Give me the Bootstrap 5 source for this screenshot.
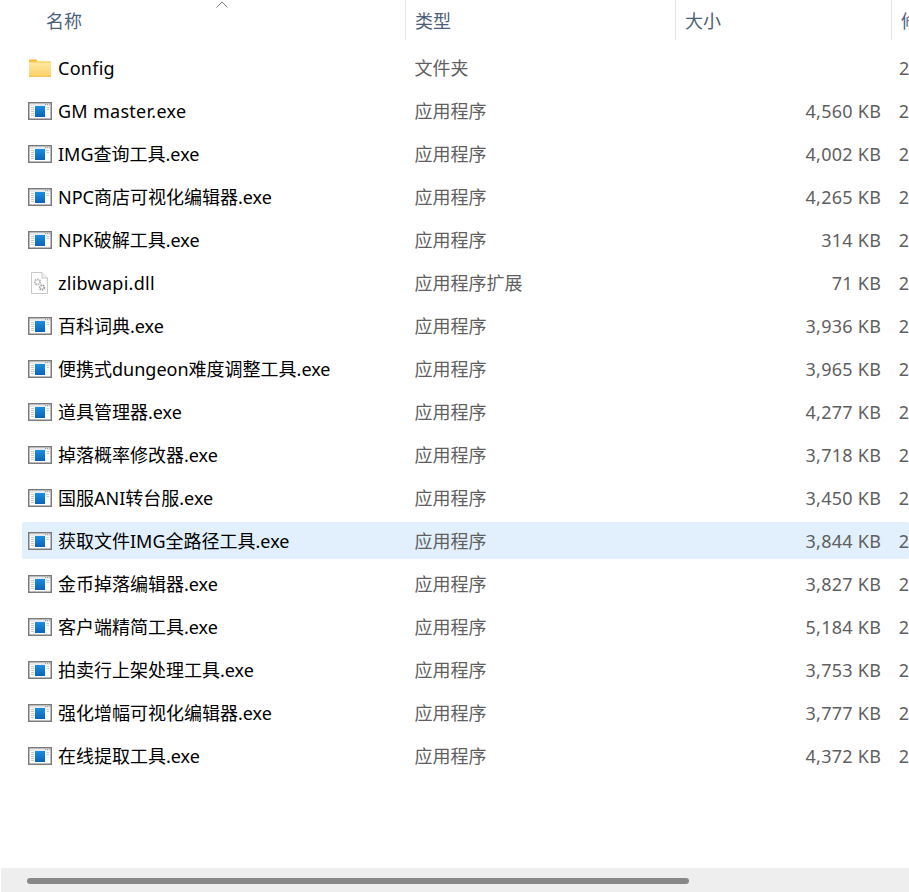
<!doctype html>
<html lang="zh">
<head>
<meta charset="utf-8">
<title>文件列表</title>
<link rel="stylesheet" href="https://cdn.jsdelivr.net/npm/bootstrap@5.3.0/dist/css/bootstrap.min.css">
<style>
html,body{height:892px;overflow:hidden;background:#fff}
body{font-family:"Noto Sans","Noto Sans CJK SC",sans-serif;font-size:18px;color:#000}
.pane{height:892px;width:909px;overflow:hidden}
.cn-w{width:383px;flex:none}
.ty-w{width:270px;flex:none}
.sz-w{width:216px;flex:none}
.hdr{height:40px;padding-left:22px;color:#4c607a;position:relative}
.hdr>div{height:40px;line-height:42px;flex:none}
.hc-name{padding-left:24px}
.hc-type,.hc-size,.hc-date{padding-left:9px;border-left:1px solid #e5e5e5}
.hc-type{width:270px}
.hc-size{width:216px}
.caret-ic{position:absolute;left:216px;top:1px}
.rows{padding-top:9px;gap:6px}
.frow{height:37px;margin-left:22px;border-radius:2px;line-height:37px;white-space:nowrap;padding-top:1px;box-sizing:border-box}
.frow.sel{background:#e1f0fc}
.nm{display:flex;align-items:center;padding-left:6px;gap:6px}
.ic{width:24px;flex:none;display:block}
.ty{padding-left:9.5px;color:#5f5f5f}
.sz{color:#5f5f5f;text-align:right;padding-right:8.6px;width:215px;letter-spacing:.25px}
.dt{color:#5f5f5f;padding-left:9px}
.lat{letter-spacing:.27px}
.trk{height:24px;margin-left:1px;background:#eee;padding:10px 0 0 26px}
.thumb{width:662px;height:6px;background:#888;border-radius:3px}
</style>
</head>
<body>
<svg width="0" height="0" class="d-block" style="position:absolute">
<defs>
<linearGradient id="b" x1="0" y1="0" x2="0" y2="1"><stop offset="0" stop-color="#1b8fe0"/><stop offset="1" stop-color="#0a62b8"/></linearGradient>
<linearGradient id="f" x1="0" y1="0" x2="0" y2="1"><stop offset="0" stop-color="#ffeaa6"/><stop offset="1" stop-color="#fcd168"/></linearGradient>
<symbol id="exe" viewBox="0 0 24 18">
<rect x=".75" y=".75" width="22.5" height="16.5" fill="#fff" stroke="#7b7b7b" stroke-width="1.5"/>
<rect x="2" y="2" width="20" height="2" fill="#e6eaee"/>
<path d="M17 2.500h1M19 2.500h1M21 2.500h.8" stroke="#8a8a8a" stroke-width=".8"/>
<path d="M3 5.500h3M3 7.500h3M3 9.500h3M3 11.500h3M3 13.500h3M18.500 5.500h2.500M18.500 7.500h2.500" stroke="#c3c8cf" stroke-width="1"/>
<rect x="7" y="4" width="10" height="11" fill="url(#b)"/>
</symbol>
<symbol id="folder" viewBox="0 0 24 18">
<path d="M1 3V1.500C1 1 1.400.5 2 .5h6l2.500 2.500z" fill="#fbb61c"/>
<rect x="1" y="2.500" width="22" height="15" rx=".5" fill="url(#f)"/>
<rect x="1" y="2.500" width="22" height="1" fill="#f8c64a"/>
<rect x="1" y="16.800" width="22" height=".8" fill="#eeb12c"/>
</symbol>
<symbol id="dll" viewBox="0 0 24 22">
<path d="M3.500.5h10.500l5.500 5.500v15.500h-16z" fill="#fff" stroke="#c9c9c9"/>
<path d="M14 .5v5.500h5.500" fill="#f2f2f2" stroke="#c9c9c9"/>
<circle cx="9.500" cy="10" r="2.600" fill="none" stroke="#b5b5b5" stroke-width="2" stroke-dasharray="1.500 .8"/>
<circle cx="14" cy="15.500" r="2.200" fill="none" stroke="#9a9a9a" stroke-width="2" stroke-dasharray="1.300 .7"/>
</symbol>
</defs>
</svg>
<div class="pane d-flex flex-column">
<div class="hdr d-flex">
<div class="hc-name cn-w">名称</div>
<div class="hc-type">类型</div>
<div class="hc-size">大小</div>
<div class="hc-date">修</div>
<svg class="caret-ic" width="12" height="7" viewBox="0 0 12 7"><path d="M.5 6.500 6 1l5.500 5.500" fill="none" stroke="#7a7a7a"/></svg>
</div>
<div class="rows d-flex flex-column">
<div class="frow d-flex"><div class="nm cn-w"><svg class="ic" height="18"><use href="#folder"/></svg><span class="lat">Config</span></div><div class="ty ty-w">文件夹</div><div class="sz sz-w"></div><div class="dt">2</div></div>
<div class="frow d-flex"><div class="nm cn-w"><svg class="ic" height="18"><use href="#exe"/></svg><span class="lat">GM master.exe</span></div><div class="ty ty-w">应用程序</div><div class="sz">4,560 KB</div><div class="dt">2</div></div>
<div class="frow d-flex"><div class="nm cn-w"><svg class="ic" height="18"><use href="#exe"/></svg>IMG查询工具.exe</div><div class="ty ty-w">应用程序</div><div class="sz">4,002 KB</div><div class="dt">2</div></div>
<div class="frow d-flex"><div class="nm cn-w"><svg class="ic" height="18"><use href="#exe"/></svg>NPC商店可视化编辑器.exe</div><div class="ty ty-w">应用程序</div><div class="sz">4,265 KB</div><div class="dt">2</div></div>
<div class="frow d-flex"><div class="nm cn-w"><svg class="ic" height="18"><use href="#exe"/></svg>NPK破解工具.exe</div><div class="ty ty-w">应用程序</div><div class="sz">314 KB</div><div class="dt">2</div></div>
<div class="frow d-flex"><div class="nm cn-w"><svg class="ic" height="22"><use href="#dll"/></svg><span class="lat">zlibwapi.dll</span></div><div class="ty ty-w">应用程序扩展</div><div class="sz">71 KB</div><div class="dt">2</div></div>
<div class="frow d-flex"><div class="nm cn-w"><svg class="ic" height="18"><use href="#exe"/></svg>百科词典.exe</div><div class="ty ty-w">应用程序</div><div class="sz">3,936 KB</div><div class="dt">2</div></div>
<div class="frow d-flex"><div class="nm cn-w"><svg class="ic" height="18"><use href="#exe"/></svg>便携式dungeon难度调整工具.exe</div><div class="ty ty-w">应用程序</div><div class="sz">3,965 KB</div><div class="dt">2</div></div>
<div class="frow d-flex"><div class="nm cn-w"><svg class="ic" height="18"><use href="#exe"/></svg>道具管理器.exe</div><div class="ty ty-w">应用程序</div><div class="sz">4,277 KB</div><div class="dt">2</div></div>
<div class="frow d-flex"><div class="nm cn-w"><svg class="ic" height="18"><use href="#exe"/></svg>掉落概率修改器.exe</div><div class="ty ty-w">应用程序</div><div class="sz">3,718 KB</div><div class="dt">2</div></div>
<div class="frow d-flex"><div class="nm cn-w"><svg class="ic" height="18"><use href="#exe"/></svg>国服ANI转台服.exe</div><div class="ty ty-w">应用程序</div><div class="sz">3,450 KB</div><div class="dt">2</div></div>
<div class="frow sel d-flex"><div class="nm cn-w"><svg class="ic" height="18"><use href="#exe"/></svg>获取文件IMG全路径工具.exe</div><div class="ty ty-w">应用程序</div><div class="sz">3,844 KB</div><div class="dt">2</div></div>
<div class="frow d-flex"><div class="nm cn-w"><svg class="ic" height="18"><use href="#exe"/></svg>金币掉落编辑器.exe</div><div class="ty ty-w">应用程序</div><div class="sz">3,827 KB</div><div class="dt">2</div></div>
<div class="frow d-flex"><div class="nm cn-w"><svg class="ic" height="18"><use href="#exe"/></svg>客户端精简工具.exe</div><div class="ty ty-w">应用程序</div><div class="sz">5,184 KB</div><div class="dt">2</div></div>
<div class="frow d-flex"><div class="nm cn-w"><svg class="ic" height="18"><use href="#exe"/></svg>拍卖行上架处理工具.exe</div><div class="ty ty-w">应用程序</div><div class="sz">3,753 KB</div><div class="dt">2</div></div>
<div class="frow d-flex"><div class="nm cn-w"><svg class="ic" height="18"><use href="#exe"/></svg>强化增幅可视化编辑器.exe</div><div class="ty ty-w">应用程序</div><div class="sz">3,777 KB</div><div class="dt">2</div></div>
<div class="frow d-flex"><div class="nm cn-w"><svg class="ic" height="18"><use href="#exe"/></svg>在线提取工具.exe</div><div class="ty ty-w">应用程序</div><div class="sz">4,372 KB</div><div class="dt">2</div></div>
</div>
<div class="trk mt-auto"><div class="thumb"></div></div>
</div>
</body>
</html>
